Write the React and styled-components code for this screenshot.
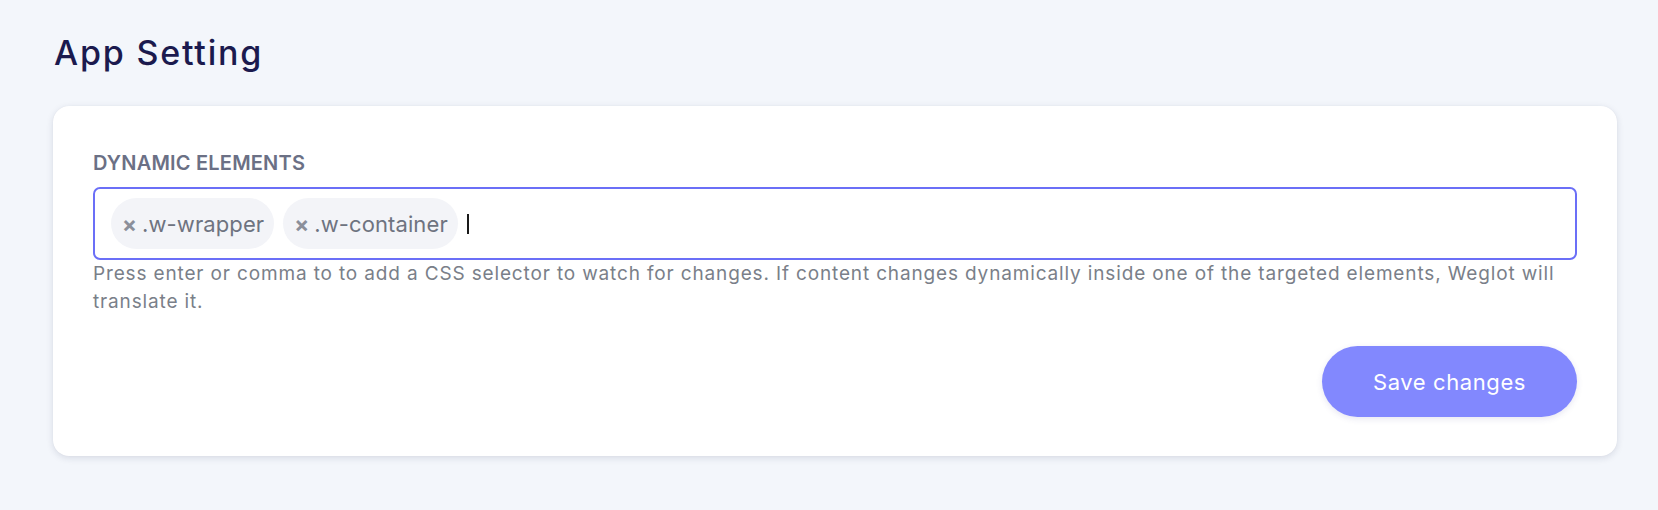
import React from "react";
import styled, { createGlobalStyle } from "styled-components";

const Global = createGlobalStyle`
  html, body {
    margin: 0;
    padding: 0;
    background: #f3f6fb;
    font-family: Inter, "Noto Sans", sans-serif;
  }
  * { box-sizing: border-box; }
`;

const Page = styled.div`
  padding: 32px 41px 40px 53px;
`;

const Title = styled.h1`
  margin: 0 0 33px 1px;
  font-size: 34px;
  line-height: 41px;
  font-weight: 500;
  letter-spacing: 1.8px;
  color: #1b1a4e;
`;

const Card = styled.section`
  background: #fff;
  border-radius: 16px;
  padding: 46px 40px 39px 40px;
  box-shadow: 0 2px 7px rgba(30, 40, 80, 0.13), 0 0 1px rgba(30, 40, 80, 0.08);
  display: flex;
  flex-direction: column;
`;

const Label = styled.label`
  font-size: 20px;
  line-height: 23px;
  font-weight: 600;
  letter-spacing: 0.2px;
  color: #6b7085;
  text-transform: uppercase;
  margin-bottom: 12px;
`;

const InputBox = styled.div`
  display: flex;
  align-items: center;
  gap: 9px;
  height: 73px;
  padding: 0 16px;
  border: 2px solid #6b6ff7;
  border-radius: 7px;
`;

const Tag = styled.span`
  display: inline-flex;
  align-items: center;
  gap: 5px;
  height: 51px;
  padding: 0 10px 0 11px;
  border-radius: 26px;
  background: #f3f4f8;
  color: #6e7380;
  font-size: 22px;
  letter-spacing: 0.1px;
`;

const Remove = styled.span`
  font-size: 22px;
  font-weight: 700;
  color: #8b8f9a;
  line-height: 1;
`;

const Caret = styled.span`
  width: 2px;
  height: 20px;
  background: #1a1a1a;
`;

const Help = styled.p`
  margin: 0;
  font-size: 19px;
  line-height: 28px;
  letter-spacing: 0.85px;
  color: #7a7f89;
`;

const Actions = styled.div`
  display: flex;
  justify-content: flex-end;
  margin-top: 30px;
`;

const SaveButton = styled.button`
  width: 255px;
  height: 71px;
  border: none;
  border-radius: 36px;
  background: #8288fe;
  color: #fff;
  font-family: Inter, sans-serif;
  font-size: 22px;
  font-weight: 400;
  letter-spacing: 0.6px;
  box-shadow: 0 2px 6px rgba(60, 60, 140, 0.12);
  cursor: pointer;
`;

const tags = [".w-wrapper", ".w-container"];

export default function App() {
  return (
    <>
      <Global />
      <Page>
        <Title>App Setting</Title>
        <Card>
          <Label>Dynamic Elements</Label>
          <InputBox>
            {tags.map((t) => (
              <Tag key={t}>
                <Remove>×</Remove>
                {t}
              </Tag>
            ))}
            <Caret />
          </InputBox>
          <Help>
            Press enter or comma to to add a CSS selector to watch for changes. If content changes dynamically inside one of the targeted elements, Weglot will translate it.
          </Help>
          <Actions>
            <SaveButton>Save changes</SaveButton>
          </Actions>
        </Card>
      </Page>
    </>
  );
}
